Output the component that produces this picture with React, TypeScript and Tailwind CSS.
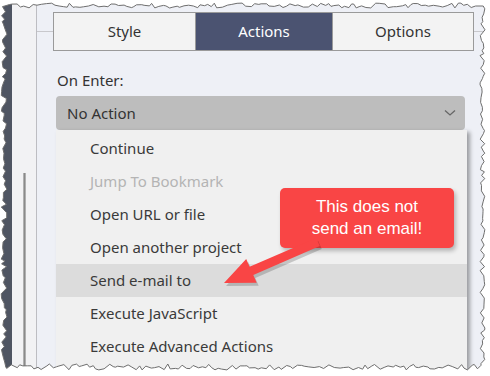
import React from "react";

function tornPath(): string {
  let s = 11;
  const r = () => {
    s = (s * 9301 + 49297) % 233280;
    return s / 233280;
  };
  const pts: [number, number][] = [];
  for (let x = 4; x < 481; x += 2 + r() * 4) pts.push([x, 3 + r() * 5]);
  for (let y = 6; y < 367; y += 2 + r() * 4) pts.push([480 + r() * 5, y]);
  for (let x = 481; x > 4; x -= 2 + r() * 4) pts.push([x, 364 + r() * 6]);
  for (let y = 367; y > 6; y -= 2 + r() * 4) pts.push([1 + r() * 6, y]);
  return "M" + pts.map((p) => `${p[0].toFixed(1)},${p[1].toFixed(1)}`).join("L") + "Z";
}

const items: { label: string; disabled?: boolean; active?: boolean }[] = [
  { label: "Continue" },
  { label: "Jump To Bookmark", disabled: true },
  { label: "Open URL or file" },
  { label: "Open another project" },
  { label: "Send e-mail to", active: true },
  { label: "Execute JavaScript" },
  { label: "Execute Advanced Actions" },
];

export default function App() {
  const torn = tornPath();
  const T = [224, 283];
  const u = [0.915, -0.404];
  const n = [0.404, 0.915];
  const B = [T[0] + 30 * u[0], T[1] + 30 * u[1]];
  const E = [318, 242];
  const w1 = [B[0] + 13 * n[0], B[1] + 13 * n[1]];
  const w2 = [B[0] - 13 * n[0], B[1] - 13 * n[1]];
  const s1 = [B[0] + 4.5 * n[0], B[1] + 4.5 * n[1]];
  const s2 = [B[0] - 4.5 * n[0], B[1] - 4.5 * n[1]];
  const e1 = [E[0] + 4.5 * n[0], E[1] + 4.5 * n[1]];
  const e2 = [E[0] - 4.5 * n[0], E[1] - 4.5 * n[1]];
  const arrow = [T, w1, s1, e1, e2, s2, w2].map((p) => `${p[0].toFixed(1)},${p[1].toFixed(1)}`).join(" ");

  return (
    <div
      className="relative w-[490px] h-[376px] overflow-hidden bg-white"
      style={{ fontFamily: '"Noto Sans", "Open Sans", sans-serif' }}
    >
      <div className="flex w-full h-full">
        <div className="w-[12px] bg-[#4f5562]" />
        <div className="w-[24px] bg-[#f2f2f4] flex flex-col">
          <div className="h-[173px]" />
          <div className="ml-[11px] w-[3px] flex-1 bg-[#8a8a8a] border-x border-[#b0b0b0]" />
        </div>
        <div className="w-px bg-[#bdbdc2]" />
        <div className="flex-1 bg-[#eef0f6] flex flex-col">
          <div className="flex items-center mt-[12px]">
            <div className="w-[16px] h-px bg-[#c8c8cc]" />
            <div className="flex h-[39px] border border-[#9a9a9a] text-[15px] text-[#333]">
              <div className="w-[142px] flex items-center justify-center bg-[#f3f3f3] border-r border-[#9a9a9a]">
                Style
              </div>
              <div className="w-[136px] flex items-center justify-center bg-[#4b5371] text-white">
                Actions
              </div>
              <div className="w-[141px] flex items-center justify-center bg-[#f3f3f3] border-l border-[#9a9a9a]">
                Options
              </div>
            </div>
            <div className="flex-1 h-px bg-[#c8c8cc]" />
          </div>
          <div className="ml-[20px] mt-[19px] text-[15px] text-[#333] leading-[20px]">On Enter:</div>
          <div className="ml-[19px] mt-[6px] w-[409px] h-[34px] rounded-[4px] bg-[#bdbdbd] flex items-center justify-between pl-[11px] pr-[9px] text-[15px] text-[#333]">
            <span>No Action</span>
            <svg width="12" height="8" viewBox="0 0 12 8">
              <path d="M1 1.5 L6 6 L11 1.5" fill="none" stroke="#666" strokeWidth="1.3" />
            </svg>
          </div>
          <div className="ml-[19px] w-[411px] flex-1 bg-[#f0f0f0] pt-[2px] shadow-[3px_2px_4px_rgba(0,0,0,0.35)] text-[15px]">
            {items.map((it) => (
              <div
                key={it.label}
                className={
                  "h-[33px] flex items-center pl-[34px] " +
                  (it.active ? "bg-[#dcdcdc] " : "") +
                  (it.disabled ? "text-[#b4b4b4]" : "text-[#3a3a3a]")
                }
              >
                {it.label}
              </div>
            ))}
          </div>
        </div>
      </div>

      <div
        className="absolute left-[280px] top-[188px] w-[174px] h-[60px] rounded-[5px] bg-[#f94545] text-white text-[17px] leading-[22px] flex flex-col items-center justify-center shadow-[2px_3px_4px_rgba(0,0,0,0.25)]"
        style={{ fontFamily: '"Liberation Sans", Arial, sans-serif' }}
      >
        <span>This does not</span>
        <span>send an email!</span>
      </div>
      <svg className="absolute left-0 top-0" width="490" height="376" viewBox="0 0 490 376">
        <polygon points={arrow} fill="#000" opacity="0.18" transform="translate(2,3)" />
        <polygon points={arrow} fill="#f94545" />
      </svg>

      <svg className="absolute left-0 top-0" width="490" height="376" viewBox="0 0 490 376">
        <path d={"M0,0H490V376H0Z" + torn} fill="#ffffff" fillRule="evenodd" />
        <path d={torn} fill="none" stroke="#6e6e6e" strokeWidth="1" />
      </svg>
    </div>
  );
}
